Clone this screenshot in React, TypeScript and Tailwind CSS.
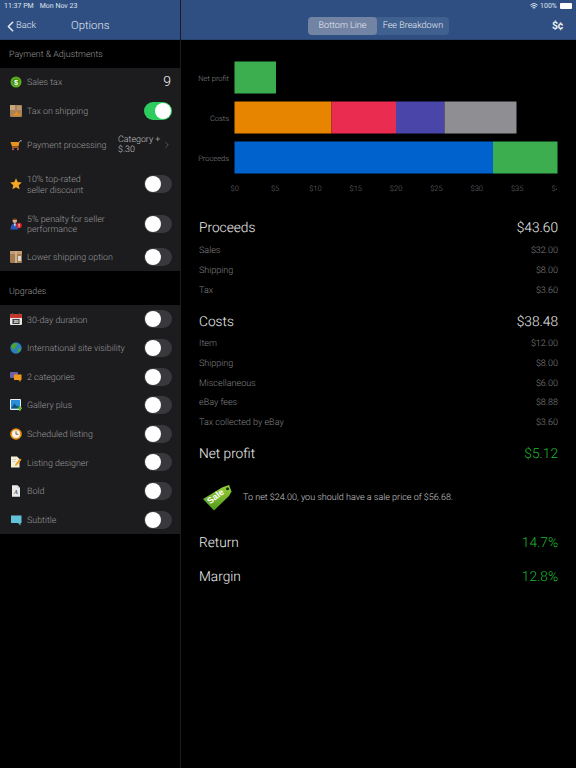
import React from "react";
import { ChevronLeft, ChevronRight, Wifi } from "lucide-react";

const ic = "w-[12px] h-[12px] block";
const icons: Record<string, React.ReactNode> = {
  tax: (
    <svg viewBox="0 0 12 12" className={ic}>
      <circle cx="6" cy="6" r="5.5" fill="#5fae1e" />
      <circle cx="6" cy="6" r="3.6" fill="#3d8f12" />
      <text x="6" y="8.6" fontSize="7.5" fontWeight="700" textAnchor="middle" fill="#fff" fontFamily="Liberation Sans">$</text>
    </svg>
  ),
  box: (
    <svg viewBox="0 0 12 12" className={ic}>
      <rect width="12" height="12" rx="1" fill="#a9835a" />
      <rect x="0" y="0" width="5" height="5" fill="#c9a67c" />
      <rect x="7" y="1" width="4" height="4" fill="#b69875" />
      <path d="M3 9h2.5V6.5h2V9H10v1.500H3z" fill="#e8901e" />
    </svg>
  ),
  cart: (
    <svg viewBox="0 0 12 12" className={ic}>
      <path d="M0.500 3H9.500L8.500 7.500H2z" fill="#e8941f" />
      <path d="M9.500 3L10 1.800H11.800" stroke="#c8c8c8" strokeWidth="0.8" fill="none" />
      <path d="M2 8.500H8.500" stroke="#b0621a" strokeWidth="1" />
      <circle cx="3" cy="10.300" r="1" fill="#c66" />
      <circle cx="8" cy="10.300" r="1" fill="#c66" />
    </svg>
  ),
  star: (
    <svg viewBox="0 0 12 12" className={ic}>
      <path d="M6 0.300L7.700 4.100 11.800 4.500 8.700 7.200 9.600 11.300 6 9.200 2.400 11.300 3.300 7.200 0.200 4.500 4.300 4.100z" fill="#f5a623" />
    </svg>
  ),
  person: (
    <svg viewBox="0 0 12 12" className={ic}>
      <circle cx="4.800" cy="2.800" r="2.300" fill="#d9a98a" />
      <path d="M2.500 1.800a2.300 2 0 0 1 4.600 0z" fill="#4a2c1a" />
      <path d="M0.500 11.500C0.500 7 2.500 5.500 4.800 5.500S8 7 8 11.500z" fill="#2756b8" />
      <path d="M3.800 5.500h2L5 9z" fill="#f2f2f2" />
      <circle cx="9" cy="7.500" r="2.800" fill="#d61f26" />
      <rect x="8.600" y="5.800" width="0.900" height="2.300" fill="#fff" />
      <rect x="8.600" y="8.500" width="0.900" height="0.900" fill="#fff" />
    </svg>
  ),
  parcel: (
    <svg viewBox="0 0 12 12" className={ic}>
      <rect width="12" height="12" rx="1" fill="#a67c52" />
      <rect x="0" y="0" width="12" height="3" fill="#c39c72" />
      <rect x="5" y="0" width="2" height="12" fill="#cbb08c" />
      <rect x="8" y="5" width="3" height="5" fill="#d8d8d8" />
    </svg>
  ),
  cal: (
    <svg viewBox="0 0 12 12" className={ic}>
      <rect y="1" width="12" height="11" rx="1" fill="#e6e6e6" />
      <rect y="1" width="12" height="4" rx="1" fill="#c8352b" />
      <rect x="2" y="0" width="1.200" height="2.500" fill="#555" />
      <rect x="8.800" y="0" width="1.200" height="2.500" fill="#555" />
      <rect x="2.500" y="6" width="7" height="5" fill="#333" />
      <text x="6" y="10.300" fontSize="4.500" fontWeight="700" textAnchor="middle" fill="#fff" fontFamily="Liberation Sans">30</text>
    </svg>
  ),
  globe: (
    <svg viewBox="0 0 12 12" className={ic}>
      <circle cx="6" cy="6" r="5.700" fill="#2a7fc4" />
      <path d="M2 2.500C4 1 6 1 7.500 2L6.500 4.500 5 5 5.500 7 3.500 7.500 1 5z" fill="#4da32f" />
      <path d="M8 6.500L11 6 10 9.500 7.500 11z" fill="#4da32f" />
    </svg>
  ),
  chat: (
    <svg viewBox="0 0 12 12" className={ic}>
      <rect x="0" y="1" width="8" height="6" rx="1" fill="#6e63a8" />
      <path d="M4 3.500h7.500v5.500h-1v2L8.500 9H4z" fill="#f09a1a" />
    </svg>
  ),
  gallery: (
    <svg viewBox="0 0 12 12" className={ic}>
      <rect width="11" height="11" rx="1" fill="#e5eef5" />
      <rect x="1" y="1" width="9" height="8.500" fill="#2a8fd8" />
      <path d="M1 9.500L4.500 4.500 7 7.500 8 6.500 10 9.500z" fill="#13527f" />
      <path d="M9 7h1.500v1.500H12V10h-1.500v2H9v-2H7.500V8.500H9z" fill="#54b52c" />
    </svg>
  ),
  clock: (
    <svg viewBox="0 0 12 12" className={ic}>
      <circle cx="6" cy="6" r="5.800" fill="#ee8e14" />
      <circle cx="6" cy="6" r="4" fill="#fbf3e2" />
      <path d="M6 3.200V6.200H8.400" stroke="#555" strokeWidth="0.900" fill="none" />
    </svg>
  ),
  note: (
    <svg viewBox="0 0 12 12" className={ic}>
      <path d="M1 0.500H7L9.500 3V11.500H1z" fill="#f5f0dc" />
      <path d="M5.500 8L10 2.500 11.500 3.700 7 9.200 5 10z" fill="#f0a020" />
      <path d="M2.500 3.500H6M2.500 5.500H5.500" stroke="#bbb" strokeWidth="0.600" />
    </svg>
  ),
  doc: (
    <svg viewBox="0 0 12 12" className={ic}>
      <path d="M2 0.300H7.500L10 2.800V11.700H2z" fill="#e9e9e9" />
      <path d="M7.500 0.300V2.800H10z" fill="#bdbdbd" />
      <text x="6" y="9.300" fontSize="6" fontStyle="italic" fontWeight="700" textAnchor="middle" fill="#555" fontFamily="Liberation Serif">A</text>
    </svg>
  ),
  sub: (
    <svg viewBox="0 0 12 12" className={ic}>
      <path d="M1 1.500H11.500V9H10.500V11.500L8 9H1z" fill="#62c3d8" />
    </svg>
  ),
};

function Toggle({ on = false }: { on?: boolean }) {
  return (
    <span className={`flex w-[28px] h-[18px] rounded-full p-[1px] shrink-0 ${on ? "bg-[#2ecc5f] justify-end" : "bg-[#39393d] justify-start"}`}>
      <span className="w-[16px] h-[16px] rounded-full bg-white" />
    </span>
  );
}

function Row({ icon, label, h, children }: { icon: string; label: React.ReactNode; h: string; children?: React.ReactNode }) {
  return (
    <div className={`flex items-center pl-[10px] pr-[8px] ${h}`}>
      <span className="w-[17px] shrink-0">{icons[icon]}</span>
      <span className="flex-1 pt-[3px] text-[8.900px] font-light leading-[10.500px] text-[#99999b]">{label}</span>
      {children}
    </div>
  );
}

function Section({ title, h }: { title: string; h: string }) {
  return <div className={`flex items-center pl-[9px] text-[8.900px] font-light text-[#99999b] ${h}`}>{title}</div>;
}

const upgrades: [string, string][] = [
  ["cal", "30-day duration"],
  ["globe", "International site visibility"],
  ["chat", "2 categories"],
  ["gallery", "Gallery plus"],
  ["clock", "Scheduled listing"],
  ["note", "Listing designer"],
  ["doc", "Bold"],
  ["sub", "Subtitle"],
];

function Detail({ label, value }: { label: string; value: string }) {
  return (
    <div className="flex justify-between items-center h-[19.800px] text-[9px] font-light text-[#808083]">
      <span>{label}</span>
      <span>{value}</span>
    </div>
  );
}

function Head({ label, value, green, h }: { label: string; value: string; green?: boolean; h: string }) {
  return (
    <div className={`flex justify-between items-center ${h} text-[13.700px] font-light text-[#f0f0f0]`}>
      <span>{label}</span>
      <span className={green ? "text-[#1fb833]" : ""}>{value}</span>
    </div>
  );
}

function Chart() {
  const ticks = ["$0", "$5", "$10", "$15", "$20", "$25", "$30", "$35"];
  const bars: [number, number, number, string][] = [
    [234.500, 61.500, 41.500, "#3cae50"],
    [234.500, 101.500, 97, "#e78400"],
    [331.500, 101.500, 64.500, "#e92c50"],
    [396, 101.500, 48.500, "#4a45a8"],
    [444.500, 101.500, 72, "#8e8e93"],
    [234.500, 141.500, 258.500, "#0062cc"],
    [493, 141.500, 64.500, "#3cae50"],
  ];
  return (
    <svg viewBox="181 40 395 160" className="block w-[395px] h-[160px]" fontFamily="Roboto" fontWeight="300">
      {bars.map(([x, y, w, c], i) => (
        <rect key={i} x={x} y={y} width={w} height={32} fill={c} />
      ))}
      <g fontSize="7.500" fill="#808084" textAnchor="end">
        <text x="229" y="81">Net profit</text>
        <text x="229" y="121">Costs</text>
        <text x="229" y="161">Proceeds</text>
      </g>
      <g fontSize="7.500" fill="#6c6c70" textAnchor="middle">
        {ticks.map((t, i) => (
          <text key={t} x={234.700 + i * 40.350} y="191">{t}</text>
        ))}
      </g>
      <text x="551.500" y="191" fontSize="7.500" fill="#6c6c70">$4</text>
      <rect x="557" y="180" width="19" height="15" fill="#000" />
    </svg>
  );
}

function SaleTag() {
  return (
    <svg viewBox="0 0 30 28" className="w-[30px] h-[28px] block shrink-0">
      <defs>
        <linearGradient id="g" x1="0" y1="0" x2="0" y2="1">
          <stop offset="0" stopColor="#9ccf3c" />
          <stop offset="1" stopColor="#4f9a1c" />
        </linearGradient>
      </defs>
      <path d="M1 15L20 3.500 27 1 29.500 7.500 27 12 12 26.500z" fill="url(#g)" />
      <circle cx="25.500" cy="4.800" r="1.500" fill="#10300a" />
      <text x="0" y="0" transform="translate(8 20.500) rotate(-38)" fontSize="9" fontWeight="700" fill="#fff" fontFamily="Liberation Sans">Sale</text>
    </svg>
  );
}

export default function App() {
  return (
    <div className="w-[576px] h-[768px] bg-black flex overflow-hidden font-['Roboto','Liberation_Sans',sans-serif] [text-rendering:geometricPrecision]">
      <aside className="w-[181px] shrink-0 border-r border-[#1c1c1e] flex flex-col">
        <header className="h-[40px] shrink-0 bg-[#2f4f82] border-b border-[#29446f] flex flex-col text-white">
          <div className="h-[11px] pt-[1px] pl-[4px] flex items-center gap-[6px] text-[7px] font-normal text-[#dfe5ef]">
            <span>11:37 PM</span>
            <span>Mon Nov 23</span>
          </div>
          <div className="flex-1 flex items-center pt-[2px]">
            <span className="flex items-center w-[71px] pl-[2px] text-[9.300px] font-light text-[#e6ebf3]">
              <ChevronLeft size={17} strokeWidth={2.200} className="text-[#e6ebf3] -mr-[3px]" />
              Back
            </span>
            <span className="text-[11.300px] font-light text-[#e0e6f0]">Options</span>
          </div>
        </header>
        <Section title="Payment & Adjustments" h="h-[28px] pt-[3px]" />
        <div className="bg-[#1c1c1e] flex flex-col">
          <Row icon="tax" label="Sales tax" h="h-[28px]">
            <span className="text-[14px] font-light text-[#f0f0f0] mr-[1px]">9</span>
          </Row>
          <Row icon="box" label="Tax on shipping" h="h-[30px]">
            <Toggle on />
          </Row>
          <Row icon="cart" label="Payment processing" h="h-[38px]">
            <span className="w-[44px] text-[8.900px] font-light leading-[10.500px] text-[#c0c0c2]">Category + $.30</span>
            <ChevronRight size={10} strokeWidth={1.500} className="text-[#77777a]" />
          </Row>
          <Row icon="star" label={<>10% top-rated<br />seller discount</>} h="h-[40px]">
            <Toggle />
          </Row>
          <Row icon="person" label={<>5% penalty for seller<br />performance</>} h="h-[39px]">
            <Toggle />
          </Row>
          <Row icon="parcel" label="Lower shipping option" h="h-[28px]">
            <Toggle />
          </Row>
        </div>
        <Section title="Upgrades" h="h-[34px] pt-[10px]" />
        <div className="bg-[#1c1c1e] flex flex-col">
          {upgrades.map(([i, l]) => (
            <Row key={l} icon={i} label={l} h="h-[28.625px]">
              <Toggle />
            </Row>
          ))}
        </div>
      </aside>
      <main className="flex-1 flex flex-col min-w-0">
        <header className="h-[40px] shrink-0 bg-[#2f4f82] border-b border-[#29446f] relative">
          <div className="h-[11px] pt-[1px] flex items-center justify-end pr-[4px] gap-[2px] text-[7px] font-normal text-[#dfe5ef]">
            <Wifi size={8} strokeWidth={3} />
            <span>100%</span>
            <span className="w-[12px] h-[6px] rounded-[1px] bg-white ml-[1px]" />
          </div>
          <div className="flex items-center justify-center pt-[6px]">
            <div className="flex h-[18px] rounded-[4px] bg-[#40608f] text-[9px] font-light text-[#e6ebf3]">
              <span className="w-[69px] rounded-[4px] bg-[#7283a4] flex items-center justify-center pt-[2px]">Bottom Line</span>
              <span className="w-[72px] flex items-center justify-center pt-[2px]">Fee Breakdown</span>
            </div>
          </div>
          <span className="absolute right-[13px] top-[18px] text-[10.500px] font-bold text-[#eef1f6] tracking-[-0.5px]">$¢</span>
        </header>
        <Chart />
        <div className="flex flex-col px-[18px]">
          <Head label="Proceeds" value="$43.60" h="h-[20px] mt-[18.500px]" />
          <div className="mt-[3.500px]">
            <Detail label="Sales" value="$32.00" />
            <Detail label="Shipping" value="$8.00" />
            <Detail label="Tax" value="$3.60" />
          </div>
          <Head label="Costs" value="$38.48" h="h-[20px] mt-[11px]" />
          <div className="mt-[2.500px]">
            <Detail label="Item" value="$12.00" />
            <Detail label="Shipping" value="$8.00" />
            <Detail label="Miscellaneous" value="$6.00" />
            <Detail label="eBay fees" value="$8.88" />
            <Detail label="Tax collected by eBay" value="$3.60" />
          </div>
          <Head label="Net profit" value="$5.12" green h="h-[20px] mt-[10.500px]" />
          <div className="flex items-center gap-[11px] h-[44px] mt-[12px] text-[9px] font-light text-[#c8c8ca] pl-[3px]">
            <SaleTag />
            <span>To net $24.00, you should have a sale price of $56.68.</span>
          </div>
          <Head label="Return" value="14.7%" green h="h-[20px] mt-[12.500px]" />
          <Head label="Margin" value="12.8%" green h="h-[20px] mt-[14px]" />
        </div>
      </main>
    </div>
  );
}
